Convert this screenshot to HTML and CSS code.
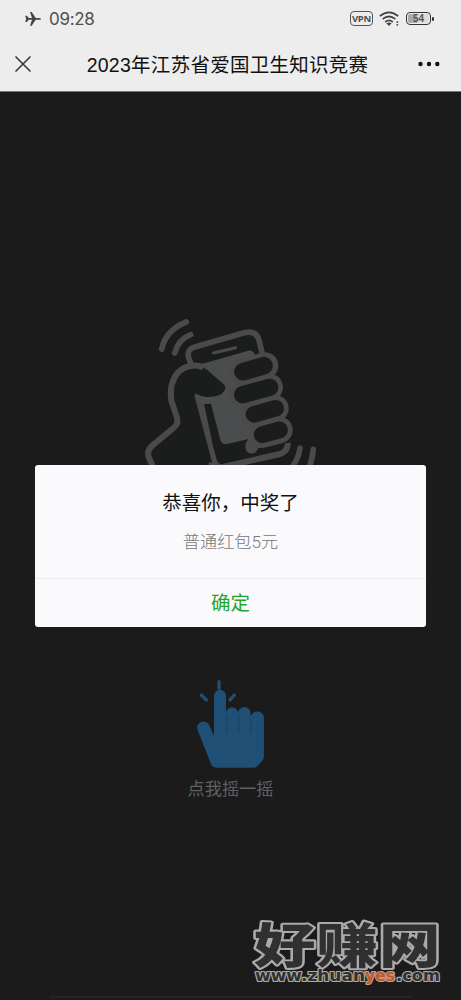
FILE: index.html
```html
<!DOCTYPE html>
<html lang="zh-CN">
<head>
<meta charset="utf-8">
<title>2023年江苏省爱国卫生知识竞赛</title>
<link rel="stylesheet" href="styles.css">
</head>
<body>
<div class="screen">
  <header class="top">
    <div class="status">
      <svg class="plane" viewBox="0 0 16 16"><path d="M.3 4.8h1.6L3.7 7H7L5 1h1.7l4 6h3.5q1.7 0 1.7.9t-1.7.9h-3.5l-4 6H5l2-6H3.7L1.9 11H.3l.8-3.1z"/></svg>
      <span class="time">09:28</span>
      <span class="vpn">VPN</span>
      <svg class="wifi" viewBox="0 0 21 16"><g fill="none" stroke="#444" stroke-width="1.7"><path d="M.8 5.2Q10 -2.6 19.2 5.2"/><path d="M3.6 8.2Q10 2.8 16.4 8.2"/><path d="M6.2 11Q10 7.8 13.8 11"/></g><path d="M7.3 12.2Q10 10.6 12.7 12.2L10 15z" fill="#444"/><path d="M17.5 10.2h1.7v1.8h-1.7zM17.5 13h1.7v1.8h-1.7z" fill="#555"/></svg>
      <span class="battery"><span class="level">54</span></span><span class="cap"></span>
    </div>
    <nav class="nav">
      <svg class="close" viewBox="0 0 18 18"><path d="M1.5 1.5l15 15M16.5 1.5l-15 15"/></svg>
      <h1 class="title">2023年江苏省爱国卫生知识竞赛</h1>
      <svg class="more" viewBox="0 0 22 6"><circle cx="2.5" cy="3" r="2.2"/><circle cx="11" cy="3" r="2.2"/><circle cx="19.3" cy="3" r="2.2"/></svg>
    </nav>
  </header>
  <main class="stage">
    <svg class="shake" viewBox="0 0 600 570">
      <g fill="none" stroke="#4a4a4a" stroke-width="17" stroke-linecap="round" stroke-linejoin="round">
        <path d="M169 51Q108 75 95 132M182 89Q145 103 134 144M510 429Q506 465 477 497M550 433Q546 481 520 520"/>
        <path d="M186 184L176 158Q169 132 197 125L340 84Q377 74 387 105L398 151" fill="#1b1d1d"/>
        <path d="M250 144L317 128" stroke-width="9"/>
      </g>
      <path d="M215 177L355 137Q368 135 372 145L410 180L440 415L270 480L195 267Z" fill="#4b4c4d"/>
      <path d="M222 297L243 296L271 405Q275 420 292 417L355 402Q340 420 350 438Q367 454 384 430L460 416Q467 436 449 443L278 483Q263 484 258 464Z" fill="#1b1d1d"/>
      <path d="M198 270L251 465Q257 490 279 486L450 447Q475 438 473 414" fill="none" stroke="#4a4a4a" stroke-width="18"/>
      <path d="M187 182Q218 180 242 204L280 237Q291 246 282 259Q269 278 230 276Q210 273 191 263L246 471L235 555L101 535Q69 492 56 455Q48 437 70 419L134 366Q148 354 138 329L124 287Q116 234 145 201Q161 185 187 182Z" fill="#1b1d1d"/>
      <path d="M246 473L235 555L101 535Q69 492 56 455Q48 437 70 419L134 366Q148 354 138 329L124 287Q116 234 145 201Q161 185 187 182Q204 180 220 187" fill="none" stroke="#4a4a4a" stroke-width="18" stroke-linejoin="round"/>
      <g stroke-linecap="round" fill="none">
        <g stroke="#4a4a4a"><path d="M340 200L405 182" stroke-width="80"/><path d="M340 267L418 247" stroke-width="82"/><path d="M374 328L436 310" stroke-width="80"/><path d="M399 388L448 375" stroke-width="80"/></g>
        <g stroke="#1b1d1d"><path d="M339 200L402 182" stroke-width="53"/><path d="M338 269L419 247" stroke-width="52"/><path d="M372 328L437 310" stroke-width="50"/><path d="M397 389L448 375" stroke-width="51"/></g>
      </g>
      <circle cx="365" cy="428" r="18" fill="#4a4a4a"/>
    </svg>
    <section class="tap">
      <svg class="hand" viewBox="0 0 220 280"><path d="M51 108V47a18 18 0 0 1 36 0V130V100a16 16 0 0 1 36 0V130V100a16 16 0 0 1 38 0V118a19 19 0 0 1 40-7V231Q200 238 195 243L182 258Q178 263 170 263H57Q46 263 41 250L3 153Q-4 136 10 127Q29 118 38 138L51 168Z" fill="#1f4f74"/><path d="M89 110V160M125 110V160M162 120V160" stroke="#1c3f5b" stroke-width="3"/><path d="M66 5v20M13 45L28 60M112 45L99 60" stroke="#1f4f74" stroke-width="10" stroke-linecap="round"/></svg>
      <p class="hint">点我摇一摇</p>
    </section>
    <div class="home-line"></div>
  </main>
  <section class="dialog" role="dialog">
    <div class="message"><h2>恭喜你，中奖了</h2><p>普通红包5元</p></div>
    <button class="ok">确定</button>
  </section>
  <svg class="watermark" viewBox="0 0 194 90">
    <g class="brand"><text transform="translate(5 61) scale(1.28 1)">好</text><text transform="translate(67.5 61) scale(1.28 1)">赚</text><text transform="translate(130 61) scale(1.28 1)">网</text></g>
    <g class="site"><text x="6" y="79" textLength="110" lengthAdjust="spacingAndGlyphs">www.zhuan</text><text class="yes" x="116" y="79" textLength="30" lengthAdjust="spacingAndGlyphs">yes</text><text x="147" y="79" textLength="44" lengthAdjust="spacingAndGlyphs">.com</text></g>
  </svg>
</div>
</body>
</html>
```
FILE: styles.css
```css
* { box-sizing: border-box; }
body, h1, h2, p { margin: 0; font-weight: 400; }
body { background: #1b1b1b; font-family: "Liberation Sans", "Noto Sans CJK SC", sans-serif; }
.screen { position: relative; width: 461px; height: 1000px; overflow: hidden; display: flex; flex-direction: column; }
.top { height: 92px; background: #ededed; border-bottom: 1px solid #777; }
.status { display: flex; align-items: center; height: 37px; padding: 0 27px 0 25px; }
.plane { width: 16px; height: 16px; fill: #444; }
.time { margin: 1px auto 0 8px; font: 17px/20px Inter, sans-serif; color: #505050; letter-spacing: -.3px; }
.vpn { width: 23px; height: 15px; border: 1.5px solid #555; border-radius: 4px; font: 700 9.5px/13px "Noto Sans", sans-serif; letter-spacing: -.2px; color: #505050; text-align: center; }
.wifi { width: 21px; height: 16px; margin: 0 6px 0 6px; }
.battery { width: 25px; height: 13px; padding: 1px; border: 1.5px solid #333; border-radius: 4px; }
.level { display: block; height: 100%; border-radius: 2px; background: linear-gradient(90deg, #aaa 0 45%, #ddd 45%); color: #555; font: 700 10px/9px "Liberation Sans", sans-serif; text-align: center; }
.cap { width: 2px; height: 4px; background: #333; border-radius: 1px; margin-left: 1px; }
.nav { display: flex; align-items: center; height: 54px; padding: 0 21px 0 14px; }
.close { width: 18px; height: 18px; fill: none; stroke: #333; stroke-width: 1.5; }
.title { flex: 1; margin-top: 1px; text-align: center; font: 400 19.5px/28px "Liberation Sans", "Noto Sans CJK SC", sans-serif; letter-spacing: .27px; color: #111; white-space: nowrap; padding-left: 5px; }
.more { width: 22px; height: 6px; fill: #111; }
.stage { flex: 1; display: flex; flex-direction: column; background: #1b1b1b; padding-top: 213px; }
.shake { width: 200px; height: 190px; margin-left: 130px; flex: none; }
.tap { margin-top: 185px; display: flex; flex-direction: column; align-items: center; }
.hand { width: 73.3px; height: 93.3px; margin-left: 7px; overflow: visible; }
.hint { margin-top: 4px; font-size: 17.2px; line-height: 24px; color: #606060; }
.home-line { width: 362px; height: 2px; margin: auto 0 2px 50px; background: #242424; }
.dialog { position: absolute; left: 35px; top: 465px; width: 391px; height: 162px; display: flex; flex-direction: column; overflow: hidden; border-radius: 3px; background: #fafafc; text-align: center; }
.message { height: 114px; padding-top: 24px; border-bottom: 1px solid #ececee; }
.message h2 { font-size: 19.5px; line-height: 28px; color: #111; }
.message p { margin-top: 13px; font: 300 17.2px/24px Roboto, "Noto Sans CJK SC", sans-serif; color: #777; }
.ok { flex: 1; border: 0; padding: 0 0 3px; background: transparent; font: 19.5px/44px "Noto Sans CJK SC", sans-serif; color: #25a52b; }
.watermark { position: absolute; left: 249px; top: 902px; width: 194px; height: 90px; }
.watermark text { paint-order: stroke; stroke-linejoin: round; stroke: #aaa; fill: #303030; font-weight: 900; }
.brand text { font-family: "Noto Sans CJK SC", sans-serif; font-size: 48px; stroke-width: 4px; }
.site text { font-family: "DejaVu Sans", sans-serif; font-size: 15px; stroke-width: 2.2px; }
.site .yes { fill: #c4572b; stroke: #b9a090; }
```
